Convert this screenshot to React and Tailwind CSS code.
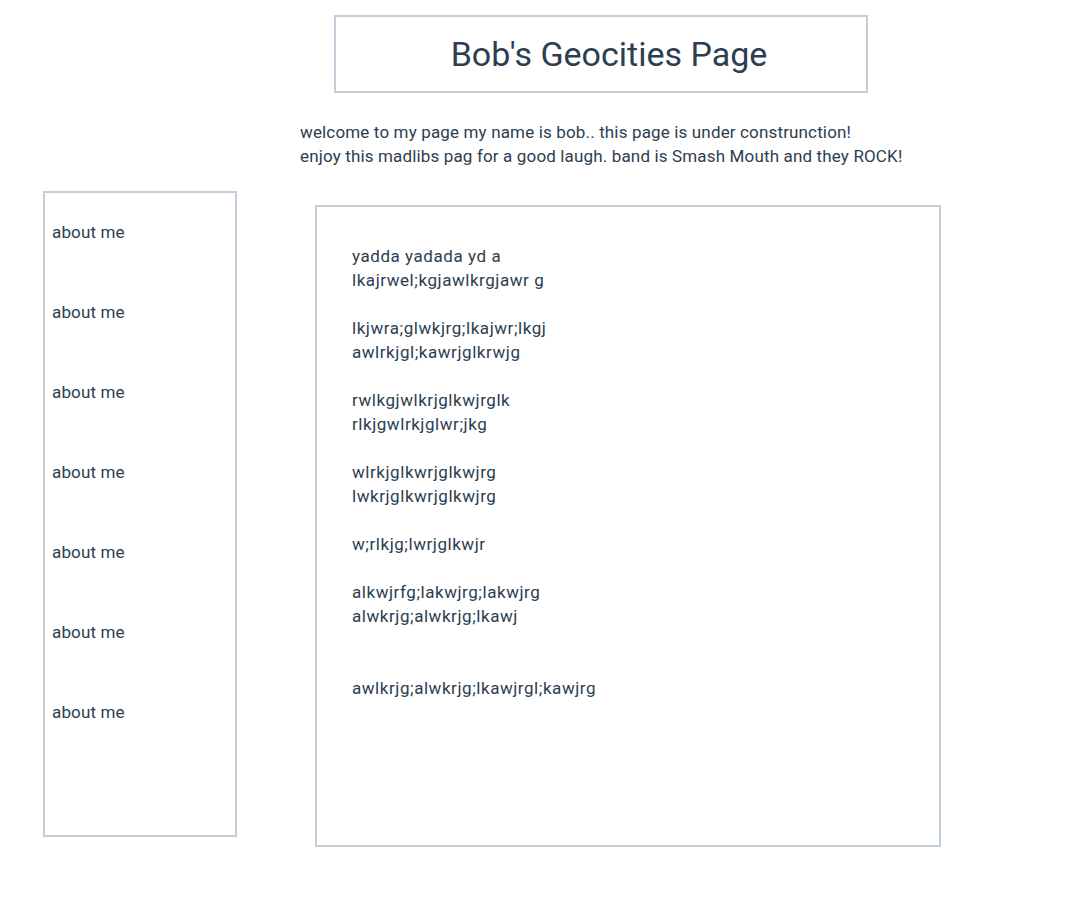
export default function App() {
  const items = Array.from({ length: 7 });
  const lines = [
    "yadda yadada yd a",
    "lkajrwel;kgjawlkrgjawr g",
    "",
    "lkjwra;glwkjrg;lkajwr;lkgj",
    "awlrkjgl;kawrjglkrwjg",
    "",
    "rwlkgjwlkrjglkwjrglk",
    "rlkjgwlrkjglwr;jkg",
    "",
    "wlrkjglkwrjglkwjrg",
    "lwkrjglkwrjglkwjrg",
    "",
    "w;rlkjg;lwrjglkwjr",
    "",
    "alkwjrfg;lakwjrg;lakwjrg",
    "alwkrjg;alwkrjg;lkawj",
    "",
    "",
    "awlkrjg;alwkrjg;lkawjrgl;kawjrg",
  ];
  return (
    <div
      className="min-h-[924px] w-[1080px] bg-white text-[#2c3e50]"
      style={{ fontFamily: "Roboto, 'Open Sans', sans-serif" }}
    >
      <div className="pt-[15px] pl-[334px]">
        <div className="flex h-[78px] w-[534px] items-center justify-center border-2 border-[#c2cfdb] pl-[16px]">
          <h1 className="text-[34px] leading-none">Bob's Geocities Page</h1>
        </div>
      </div>
      <div className="mt-[27px] pl-[300px] text-[17px] leading-[24px] tracking-[0.15px]">
        <p>welcome to my page my name is bob.. this page is under construnction!</p>
        <p>enjoy this madlibs pag for a good laugh. band is Smash Mouth and they ROCK!</p>
      </div>
      <div className="mt-[23px] flex items-start pl-[43px]">
        <div className="flex h-[646px] w-[194px] flex-col gap-[56px] border-2 border-[#c2cfdb] pl-[7px] pt-[27px] text-[17px] leading-[24px] tracking-[0.15px]">
          {items.map((_, i) => (
            <p key={i}>about me</p>
          ))}
        </div>
        <div className="ml-[78px] mt-[14px] h-[642px] w-[626px] border-2 border-[#c2cfdb] pl-[35px] pt-[37px] text-[17px] leading-[24px] tracking-[0.55px]">
          {lines.map((l, i) => (
            <p key={i} className="h-[24px]">
              {l}
            </p>
          ))}
        </div>
      </div>
    </div>
  );
}
